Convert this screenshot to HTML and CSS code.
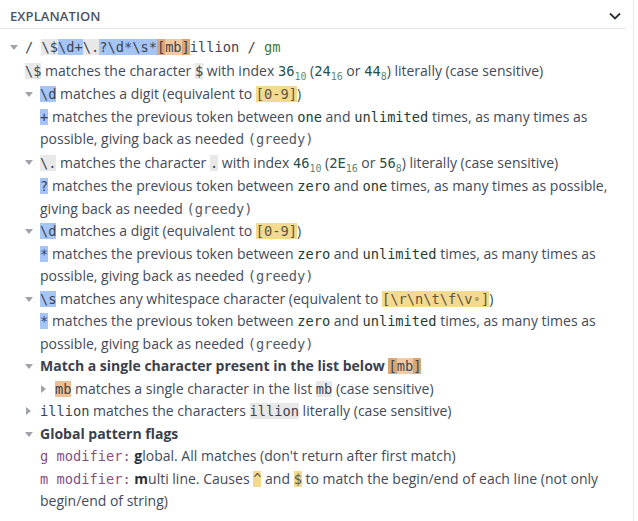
FILE: index.html
```html
<!DOCTYPE html>
<html>
<head>
<meta charset="utf-8">
<link rel="stylesheet" href="styles.css">
</head>
<body>
<div class="panel">
  <div class="header">
    <span class="title">EXPLANATION</span>
    <svg class="chev" width="12" height="8" viewBox="0 0 12 8"><path d="M1 1.5 L6 6.5 L11 1.5" fill="none" stroke="#2b2f36" stroke-width="1.8"/></svg>
  </div>
  <div class="tree">
    <div class="node">
      <div class="row"><span class="tog down"></span><span class="txt"><span class="m">/ <span class="hg">\$</span><span class="hb">\d+</span><span class="hg">\.</span><span class="hb">?\d*\s*</span><span class="ho"><span class="hod">[</span>mb<span class="hod">]</span></span>illion / <span class="flag">gm</span></span></span></div>
      <div class="kids">
        <div class="leaf tall"><span class="m hg">\$</span> matches the character <span class="m hg">$</span> with index <span class="num">36</span><sub>10</sub> (<span class="num">24</span><sub>16</sub> or <span class="num">44</span><sub>8</sub>) literally (case sensitive)</div>

        <div class="node">
          <div class="row"><span class="tog down"></span><span class="txt"><span class="m hb">\d</span> matches a digit (equivalent to <span class="m hy">[0-9]</span>)</span></div>
          <div class="kids">
            <div class="leaf"><span class="m hb">+</span> matches the previous token between <span class="kw">one</span> and <span class="kw">unlimited</span> times, as many times as possible, giving back as needed <span class="m gr">(greedy)</span></div>
          </div>
        </div>

        <div class="node">
          <div class="row tall"><span class="tog down"></span><span class="txt"><span class="m hg">\.</span> matches the character <span class="m hg">.</span> with index <span class="num">46</span><sub>10</sub> (<span class="num">2E</span><sub>16</sub> or <span class="num">56</span><sub>8</sub>) literally (case sensitive)</span></div>
          <div class="kids">
            <div class="leaf"><span class="m hb">?</span> matches the previous token between <span class="kw">zero</span> and <span class="kw">one</span> times, as many times as possible, giving back as needed <span class="m gr">(greedy)</span></div>
          </div>
        </div>

        <div class="node">
          <div class="row"><span class="tog down"></span><span class="txt"><span class="m hb">\d</span> matches a digit (equivalent to <span class="m hy">[0-9]</span>)</span></div>
          <div class="kids">
            <div class="leaf"><span class="m hb">*</span> matches the previous token between <span class="kw">zero</span> and <span class="kw">unlimited</span> times, as many times as possible, giving back as needed <span class="m gr">(greedy)</span></div>
          </div>
        </div>

        <div class="node">
          <div class="row"><span class="tog down"></span><span class="txt"><span class="m hb">\s</span> matches any whitespace character (equivalent to <span class="m hy">[\r\n\t\f\v<span class="dot">•</span>]</span>)</span></div>
          <div class="kids">
            <div class="leaf"><span class="m hb">*</span> matches the previous token between <span class="kw">zero</span> and <span class="kw">unlimited</span> times, as many times as possible, giving back as needed <span class="m gr">(greedy)</span></div>
          </div>
        </div>

        <div class="node">
          <div class="row"><span class="tog down"></span><span class="txt"><b>Match a single character present in the list below</b> <span class="m ho"><span class="hod">[</span>mb<span class="hod">]</span></span></span></div>
          <div class="kids">
            <div class="node">
              <div class="row"><span class="tog right"></span><span class="txt"><span class="m hom">mb</span> matches a single character in the list <span class="m hg">mb</span> (case sensitive)</span></div>
            </div>
          </div>
        </div>

        <div class="node">
          <div class="row"><span class="tog right"></span><span class="txt"><span class="m">illion</span> matches the characters <span class="m hg">illion</span> literally (case sensitive)</span></div>
        </div>

        <div class="node">
          <div class="row"><span class="tog down"></span><span class="txt"><b>Global pattern flags</b></span></div>
          <div class="kids">
            <div class="leaf"><span class="m mod">g modifier:</span> <b class="fl">g</b>lobal. All matches (don't return after first match)</div>
            <div class="leaf"><span class="m mod">m modifier:</span> <b class="fl">m</b>ulti line. Causes <span class="m hy">^</span> and <span class="m hy">$</span> to match the begin/end of each line (not only begin/end of string)</div>
          </div>
        </div>
      </div>
    </div>
  </div>
</div>
</body>
</html>
```

FILE: styles.css
```css
html, body {
  margin: 0;
  padding: 0;
  background: #ffffff;
}
body {
  width: 638px;
  height: 521px;
  overflow: hidden;
  font-family: "Open Sans", "Noto Sans", sans-serif;
  font-size: 14px;
  color: #434a58;
}
.panel {
  width: 626px;
  height: 521px;
  border-right: 1px solid #e8e8e8;
  padding-right: 7px;
}
.header {
  height: 29px;
  box-sizing: border-box;
  padding-top: 4px;
  border-bottom: 1px solid #e4e4e4;
  display: flex;
  align-items: center;
  justify-content: space-between;
  padding-left: 10px;
  padding-right: 5px;
}
.title {
  font-size: 13px;
  font-weight: 600;
  color: #4b5363;
  letter-spacing: 0.1px;
}
.chev {
  display: block;
}
.tree {
  padding: 7px 0 0 10px;
  line-height: 22.5px;
}
.tall {
  line-height: 23.6px;
}
.row {
  display: flex;
}
.txt {
  flex: 1;
}
.tog {
  width: 15px;
  flex: none;
  position: relative;
}
.tog::before {
  content: "";
  position: absolute;
  left: 0;
  border: 0 solid transparent;
}
.tog.down::before {
  left: 0px;
  top: 9px;
  border-width: 5.5px 4.5px 0 4.5px;
  border-top-color: #a0a3a8;
}
.tog.right::before {
  left: 1px;
  top: 7px;
  border-width: 4.5px 0 4.5px 5.5px;
  border-left-color: #a0a3a8;
}
.kids {
  padding-left: 15px;
}
.m {
  font-family: "DejaVu Sans Mono", "Liberation Mono", monospace;
  font-size: 13.7px;
  color: #3e4450;
}
.hg { background: #e8e8e8; }
.hb { background: #a5c5f7; }
.hy { background: #f3da8f; color: #5e5640; }
.ho { background: #f2c9a1; }
.hod { background: #dda670; }
.hom { background: #edbf93; }
.dot { color: #b8a36a; }
.flag { color: #3c7a3a; }
.num {
  font-family: "DejaVu Sans Mono", "Liberation Mono", monospace;
  font-size: 13.7px;
  color: #24504a;
}
sub {
  font-family: "DejaVu Sans Mono", "Liberation Mono", monospace;
  font-size: 10px;
  color: #5a8a7a;
  line-height: 0;
  vertical-align: -4px;
}
.kw {
  font-family: "DejaVu Sans Mono", "Liberation Mono", monospace;
  font-size: 13.7px;
  color: #1f3d30;
}
.gr { color: #545a63; }
.mod { color: #8a4d84; }
b { font-weight: 700; color: #3a404c; }
.fl { font-weight: 700; color: #2a2e36; }
```
